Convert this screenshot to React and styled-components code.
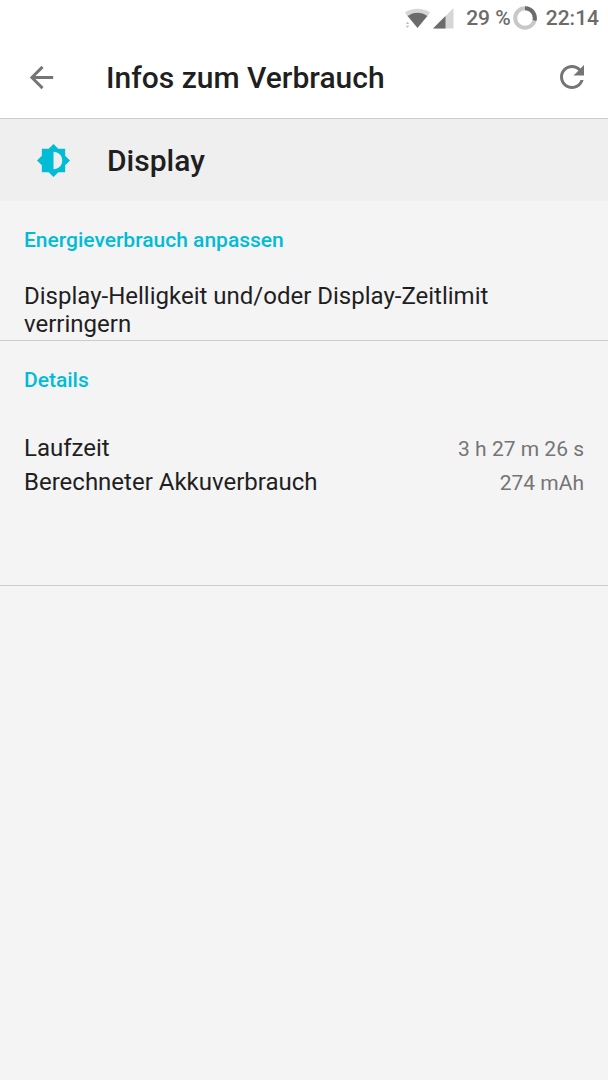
import React from 'react';
import styled, { createGlobalStyle } from 'styled-components';

const GlobalStyle = createGlobalStyle`
  * {
    box-sizing: border-box;
  }

  body {
    margin: 0;
    background: #f4f4f4;
    color: #1f1f1f;
    font-family: Roboto, 'Noto Sans', sans-serif;
  }
`;

const Page = styled.div`
  display: flex;
  flex-direction: column;
  min-height: 100vh;
`;

const StatusBar = styled.div`
  display: flex;
  align-items: center;
  justify-content: flex-end;
  height: 36px;
  padding-right: 9px;
  background: #ffffff;
  color: #6b6b6b;
  font-size: 21px;
  font-weight: 500;
  line-height: 36px;
`;

const StatusIcon = styled.svg`
  display: block;
  flex: none;
  margin-right: ${({ $gap }) => $gap}px;
`;

const BatteryLevel = styled.span`
  margin-right: 2px;
`;

const AppBar = styled.header`
  display: flex;
  align-items: center;
  height: 83px;
  padding: 0 18px 0 24px;
  background: #ffffff;
  border-bottom: 1px solid #c9cfcf;
`;

const IconButton = styled.button`
  display: flex;
  flex: none;
  padding: 0;
  border: none;
  background: transparent;
  color: #757575;
  cursor: pointer;
`;

const Icon = styled.svg`
  display: block;
  flex: none;
  width: ${({ $size }) => $size}px;
  height: ${({ $size }) => $size}px;
  fill: currentColor;
`;

const Title = styled.h1`
  flex: 1;
  margin: 0 0 0 47px;
  padding-top: 2px;
  font-size: 30px;
  font-weight: 500;
  line-height: 36px;
`;

const AppRow = styled.div`
  display: flex;
  align-items: center;
  height: 82px;
  padding: 0 24px 0 36px;
  background: #efefef;
  color: #00bcd4;
`;

const AppName = styled.h2`
  margin: 0 0 0 36px;
  padding-top: 2px;
  color: #1f1f1f;
  font-size: 30px;
  font-weight: 500;
  line-height: 36px;
`;

const Section = styled.section`
  padding: 26px 24px ${({ $bottom }) => $bottom}px;
  border-bottom: 1px solid #cccccc;
`;

const SectionTitle = styled.h3`
  margin: 0;
  color: #00bcd4;
  font-size: 21px;
  font-weight: 500;
  line-height: 26px;
`;

const Hint = styled.p`
  margin: 29px 0 0;
  font-size: 24px;
  line-height: 28px;
`;

const Details = styled.dl`
  display: flex;
  flex-direction: column;
  gap: 5px;
  margin: 41px 0 0;
`;

const DetailRow = styled.div`
  display: flex;
  align-items: baseline;
  justify-content: space-between;
  line-height: 28px;
`;

const Label = styled.dt`
  font-size: 24px;
`;

const Value = styled.dd`
  margin: 0;
  color: #757575;
  font-size: 21px;
`;

const details = [
  { label: 'Laufzeit', value: '3 h 27 m 26 s' },
  { label: 'Berechneter Akkuverbrauch', value: '274 mAh' },
];

function WifiIcon() {
  return (
    <StatusIcon $gap={3} width="25" height="22" viewBox="0 0 25 22" aria-hidden="true">
      <path d="M0 5.500C7 .5 18 .5 25 5.500L22.400 9.500H2.600z" fill="#d6d6d6" />
      <path d="M2.600 9C8.500 4.500 16.500 4.500 22.400 9L12.500 21z" fill="#6b6b6b" />
      <path d="M.8 17L2.500 14.800L4.200 17zM.8 18.800L2.500 21L4.200 18.800z" fill="#bdbdbd" />
    </StatusIcon>
  );
}

function SignalIcon() {
  return (
    <StatusIcon $gap={12} width="21" height="21" viewBox="0 0 21 21" aria-hidden="true">
      <path d="M20.500 0V20.500H0z" fill="#d6d6d6" />
      <path d="M12.500 8V20.500H0z" fill="#6b6b6b" />
    </StatusIcon>
  );
}

function BatteryIcon() {
  return (
    <StatusIcon $gap={9} width="24" height="24" viewBox="0 0 24 24" aria-hidden="true">
      <circle cx="12" cy="12" r="9.800" fill="none" stroke="#c8c8c8" strokeWidth="4" />
      <path d="M12 2.200A9.800 9.800 0 0 1 21.500 14.500" fill="none" stroke="#6b6b6b" strokeWidth="4" />
    </StatusIcon>
  );
}

export default function App() {
  return (
    <Page>
      <GlobalStyle />
      <StatusBar>
        <WifiIcon />
        <SignalIcon />
        <BatteryLevel>29 %</BatteryLevel>
        <BatteryIcon />
        <span>22:14</span>
      </StatusBar>

      <AppBar>
        <IconButton type="button" aria-label="Zurück">
          <Icon $size={35} viewBox="0 0 24 24">
            <path d="M20 11H7.830l5.590-5.590L12 4l-8 8 8 8 1.410-1.410L7.830 13H20v-2z" />
          </Icon>
        </IconButton>
        <Title>Infos zum Verbrauch</Title>
        <IconButton type="button" aria-label="Aktualisieren">
          <Icon $size={36} viewBox="0 0 24 24">
            <path d="M17.650 6.350C16.200 4.900 14.210 4 12 4c-4.420 0-7.990 3.580-7.990 8s3.570 8 7.990 8c3.730 0 6.840-2.550 7.730-6h-2.080c-.82 2.330-3.040 4-5.650 4-3.310 0-6-2.690-6-6s2.690-6 6-6c1.660 0 3.140.69 4.220 1.780L13 11h7V4l-2.350 2.350z" />
          </Icon>
        </IconButton>
      </AppBar>

      <main>
        <AppRow>
          <Icon $size={35} viewBox="0 0 24 24" aria-hidden="true">
            <path d="M20 15.310L23.310 12 20 8.690V4h-4.690L12 .69 8.690 4H4v4.690L.69 12 4 15.310V20h4.690L12 23.310 15.310 20H20v-4.690zM12 18V6c3.310 0 6 2.690 6 6s-2.690 6-6 6z" />
          </Icon>
          <AppName>Display</AppName>
        </AppRow>

        <Section $bottom={2}>
          <SectionTitle>Energieverbrauch anpassen</SectionTitle>
          <Hint>Display-Helligkeit und/oder Display-Zeitlimit verringern</Hint>
        </Section>

        <Section $bottom={88}>
          <SectionTitle>Details</SectionTitle>
          <Details>
            {details.map(({ label, value }) => (
              <DetailRow key={label}>
                <Label>{label}</Label>
                <Value>{value}</Value>
              </DetailRow>
            ))}
          </Details>
        </Section>
      </main>
    </Page>
  );
}
